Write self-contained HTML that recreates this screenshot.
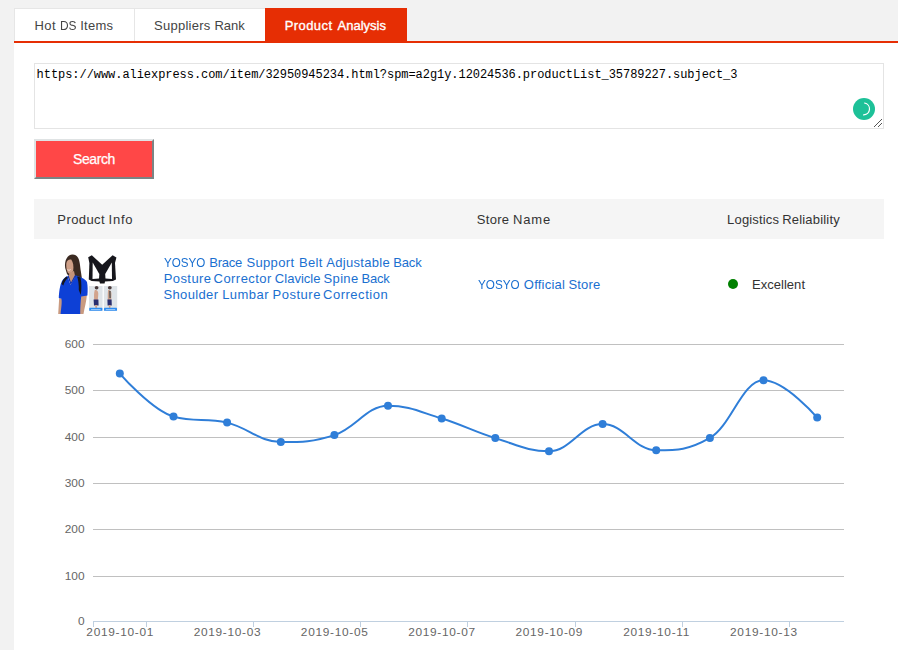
<!DOCTYPE html>
<html lang="en">
<head>
<meta charset="utf-8">
<title>Product Analysis</title>
<style>
html,body{margin:0;padding:0;}
body{width:898px;height:650px;overflow:hidden;background:#f2f2f2;font-family:"Liberation Sans",sans-serif;color:#333;position:relative;}
.abs{position:absolute;}
#panel{left:14px;top:42px;width:884px;height:608px;background:#fff;}
#tabs{left:14px;top:8px;height:33px;width:884px;}
#redline{left:14px;top:41px;width:884px;height:2px;background:#e62e04;}
.tab{position:absolute;top:0;height:33px;line-height:33px;font-size:13px;color:#444;background:#fff;box-sizing:border-box;border-top:1px solid #e6e6e6;white-space:nowrap;}
#t1{left:0;width:121px;border-left:1px solid #e6e6e6;border-right:1px solid #e6e6e6;}
#t2{left:121px;width:130px;}
#t3{left:251px;width:142px;background:#e62e04;color:#fff;border-top-color:#e62e04;-webkit-text-stroke:0.35px #fff;}
.tab span{position:absolute;top:0;}
#ta{left:34px;top:63px;width:850px;height:66px;box-sizing:border-box;border:1px solid #e4e4e4;background:#fff;}
#ta span{position:absolute;left:1.6px;top:4px;font-family:"Liberation Mono",monospace;font-size:12px;letter-spacing:-0.05px;color:#000;line-height:15px;white-space:nowrap;}
#btn{left:34px;top:139px;width:120px;height:40px;box-sizing:border-box;border:2px solid;border-color:#dfe3e4 #7b8484 #7b8484 #dfe3e4;background:#ff4747;color:#fff;font-size:14px;letter-spacing:-0.4px;text-align:center;line-height:37px;-webkit-text-stroke:0.25px #fff;}
#thead{left:34px;top:199px;width:850px;height:40px;background:#f5f5f5;}
.th{position:absolute;top:200px;height:40px;line-height:40px;font-size:13px;color:#333;white-space:nowrap;}
.link{color:#1a6fd0;}
</style>
</head>
<body>
<div class="abs" id="panel"></div>
<div class="abs" id="tabs">
  <div class="tab" id="t1"><span style="position:absolute;left:19.4px;top:0px;letter-spacing:0.5px">Hot </span><span style="position:absolute;left:44.5px;top:0px;transform:scaleX(0.918);transform-origin:0 0">DS </span><span style="position:absolute;left:65.2px;top:0px;letter-spacing:0.25px">Items</span></div>
  <div class="tab" id="t2"><span style="position:absolute;left:19.0px;top:0px;letter-spacing:0.27px">Suppliers </span><span style="position:absolute;left:79.5px;top:0px;letter-spacing:-0.07px">Rank</span></div>
  <div class="tab" id="t3"><span style="position:absolute;left:19.8px;top:0px;letter-spacing:0.4px">Product </span><span style="position:absolute;left:72.6px;top:0px;letter-spacing:0.0px">Analysis</span></div>
</div>
<div class="abs" id="redline"></div>

<div class="abs" id="ta"><span>https://www.aliexpress.com/item/32950945234.html?spm=a2g1y.12024536.productList_35789227.subject_3</span></div>
<svg class="abs" style="left:853px;top:98px" width="32" height="32" viewBox="0 0 32 32">
  <circle cx="11" cy="11" r="11" fill="#1dc198"/>
  <path d="M11.6 5 A6 6 0 0 1 10.6 16.9" fill="none" stroke="#fff" stroke-width="1.2" stroke-linecap="round"/>
  <path d="M21 29 L29 21 M25 29 L29 25" stroke="#555" stroke-width="1" fill="none"/>
</svg>

<div class="abs" id="btn">Search</div>

<div class="abs" id="thead"></div>
<div class="th" style="left:0"><span style="position:absolute;left:57.3px;top:0px;letter-spacing:0.42px">Product </span><span style="position:absolute;left:108.5px;top:0px;letter-spacing:0.77px">Info</span></div>
<div class="th" style="left:0"><span style="position:absolute;left:476.8px;top:0px;letter-spacing:0.3px">Store </span><span style="position:absolute;left:513.1px;top:0px;letter-spacing:0.8px">Name</span></div>
<div class="th" style="left:0"><span style="position:absolute;left:727.1px;top:0px;letter-spacing:0.17px">Logistics </span><span style="position:absolute;left:782.2px;top:0px;letter-spacing:0.19px">Reliability</span></div>

<svg class="abs" id="pimg" style="left:58px;top:254px" width="60" height="60" viewBox="0 0 60 60">
<defs><filter id="bl" x="-5%" y="-5%" width="110%" height="110%"><feGaussianBlur stdDeviation="0.45"/></filter></defs>
<rect width="60" height="60" fill="#fff"/>
<g filter="url(#bl)">
<!-- hair back -->
<path d="M7.2 14 C6.2 6 9.5 0.6 14.5 0.4 C19.5 0.4 21.5 5 22 11 C22.6 17 23.6 21 24 25.5 L18.5 25.5 L12 23 L9 20 Z" fill="#3b2a22"/>
<!-- face -->
<path d="M8.3 9.5 C8.6 6.5 11 5 13.2 5.6 C15.2 8 15.8 12.5 15.2 16.5 C14.5 18.8 12.5 20 10.8 19.6 C9 18.5 8 14 8.3 9.5 Z" fill="#cfa088"/>
<path d="M9.5 15.6 C10.5 16.5 11.8 16.4 12.6 15.4" stroke="#fff" stroke-width="0.7" fill="none"/>
<!-- neck -->
<path d="M11.5 18.5 L16 17 L17.5 24 L13 30 L10.5 23 Z" fill="#c4937a"/>
<!-- left arm -->
<path d="M1.2 44 L4.5 45 L3.6 60 L0.2 60 Z" fill="#c99a80"/>
<!-- right arm -->
<path d="M22.5 41 L29 40 C28.5 47 26.5 54 25.5 60 L21.5 60 Z" fill="#c99a80"/>
<!-- shirt -->
<path d="M9.5 22 L12.5 31 L18 21.5 C22 23 27 24.5 29 28 C29.8 32 29.8 37 29.4 41.5 L23.2 42.5 C22.6 48 22.2 54 22.2 60 L2.6 60 C3.2 54 4.2 48 3.4 44.8 L0.8 44 C1 38 2 31 4 27 C5.5 24.5 7.5 23 9.5 22 Z" fill="#0f3fd6"/>
<path d="M10.6 21.5 L13 29.5 L17.4 21 Z" fill="#c4937a"/>
<path d="M9.5 22 L12.7 31 L18 21.5 L17 21 L13 28.6 L10.6 21.6 Z" fill="#0a2fb0"/>
<!-- straps on woman -->
<path d="M3.6 30 C4.2 26.5 6.3 24 8.8 22.6 L9.8 24 C7.6 26 6.2 28.5 5.4 31.5 Z" fill="#15151a"/>
<path d="M19.2 22.4 L22.6 23.6 C23.6 29 23.6 35 22.8 41 L20.8 36 C21 31 20.4 26.5 19.2 22.4 Z" fill="#15151a"/>
<!-- brace -->
<path d="M30.2 3.2 L33.8 1.2 L44.2 10.8 L54.6 1.2 L58.4 3.4 L57 9 L58 25.5 L54.8 27 L47 27.6 L46.6 29.6 L42 29.6 L41.4 27.6 L33.6 27 L30.8 25.5 L31.4 9 Z" fill="#17171b"/>
<path d="M34.7 8.4 L41.3 20 L41 24.4 L34.5 25 Z" fill="#fff"/>
<path d="M53.8 8.4 L47.2 20 L47.5 24.4 L54 25 Z" fill="#fff"/>
<path d="M39.2 5.2 L44.2 11 L49.2 5.2 L44.2 4.2 Z" fill="#fff" opacity="0"/>
<!-- photos -->
<rect x="31" y="32" width="13.6" height="24.8" fill="#dfe4e8"/>
<rect x="45.8" y="32" width="13.4" height="24.8" fill="#dfe4e8"/>
<ellipse cx="38.6" cy="33.8" rx="1.9" ry="1.8" fill="#4a3a3a"/>
<ellipse cx="51.8" cy="33.8" rx="1.9" ry="1.8" fill="#4a3a3a"/>
<path d="M36.8 36 C39.5 35.5 40.8 38 40.2 41.5 L39.8 46 L36.2 46 C36 42.5 35.8 39 36.8 36 Z" fill="#d2a48c"/>
<path d="M50.2 36 C52.8 35.5 53.8 38 53.4 41.5 L53.2 46 L49.8 46 C49.8 42.5 49.6 39 50.2 36 Z" fill="#c9a08c"/>
<path d="M51.2 37 L52.6 37 L52.8 44 L51.4 44 Z" fill="#555"/>
<path d="M35.6 45.4 L40.4 45.4 L40.6 51.4 L36 51.4 Z" fill="#2a2f6e"/>
<path d="M49.4 45.4 L53.6 45.4 L53.8 51.4 L49.6 51.4 Z" fill="#2a2f6e"/>
<path d="M37 51 L39.2 51 L39 54 L37.4 54 Z" fill="#d2a48c"/>
<path d="M50.6 51 L52.6 51 L52.4 54 L51 54 Z" fill="#d2a48c"/>
<rect x="31.2" y="53.8" width="13.2" height="3" rx="0.6" fill="#2f8df2"/>
<rect x="46" y="53.8" width="13" height="3" rx="0.6" fill="#2f8df2"/>
<rect x="33" y="55" width="9.6" height="0.7" fill="#bfe0ff"/>
<rect x="47.8" y="55" width="9.4" height="0.7" fill="#bfe0ff"/>
</g>
</svg>

<div class="abs link" id="title" style="left:0;top:255px;font-size:13px;line-height:16px;white-space:nowrap">
<span class="abs" style="left:164.4px;top:0px;transform:scaleX(0.895);transform-origin:0 0">YOSYO </span>
<span class="abs" style="left:209.2px;top:0px;letter-spacing:-0.2px">Brace </span>
<span class="abs" style="left:246.4px;top:0px;letter-spacing:0.35px">Support </span>
<span class="abs" style="left:299.1px;top:0px;letter-spacing:0.3px">Belt </span>
<span class="abs" style="left:326.2px;top:0px;letter-spacing:0.32px">Adjustable </span>
<span class="abs" style="left:393.2px;top:0px;letter-spacing:-0.13px">Back</span>
<span class="abs" style="left:163.7px;top:16px;letter-spacing:0.42px">Posture </span>
<span class="abs" style="left:213.6px;top:16px;letter-spacing:0.44px">Corrector </span>
<span class="abs" style="left:274.8px;top:16px;letter-spacing:0.03px">Clavicle </span>
<span class="abs" style="left:323.6px;top:16px;letter-spacing:0.32px">Spine </span>
<span class="abs" style="left:361.5px;top:16px;letter-spacing:-0.23px">Back</span>
<span class="abs" style="left:163.4px;top:32px;letter-spacing:0.37px">Shoulder </span>
<span class="abs" style="left:222.2px;top:32px;letter-spacing:0.44px">Lumbar </span>
<span class="abs" style="left:272.6px;top:32px;letter-spacing:0.5px">Posture </span>
<span class="abs" style="left:323px;top:32px;letter-spacing:0.52px">Correction</span>
</div>
<div class="abs link" style="left:0;top:277px;font-size:13px;line-height:16px;white-space:nowrap"><span style="position:absolute;left:478.1px;top:0px;transform:scaleX(0.902);transform-origin:0 0">YOSYO </span><span style="position:absolute;left:523.8px;top:0px;letter-spacing:0.23px">Official </span><span style="position:absolute;left:568.4px;top:0px;letter-spacing:0.22px">Store</span></div>
<div class="abs" style="left:728px;top:279px;width:10px;height:10px;border-radius:50%;background:#008000"></div>
<div class="abs" style="left:752px;top:277px;font-size:13px;letter-spacing:0.03px;line-height:16px;white-space:nowrap;color:#333">Excellent</div>

<svg class="abs" id="chart" style="left:34px;top:330px" width="850" height="320" viewBox="34 330 850 320">
<rect x="93" y="344" width="751" height="1" fill="#c0c0c0"/>
<rect x="93" y="390" width="751" height="1" fill="#c0c0c0"/>
<rect x="93" y="437" width="751" height="1" fill="#c0c0c0"/>
<rect x="93" y="483" width="751" height="1" fill="#c0c0c0"/>
<rect x="93" y="529" width="751" height="1" fill="#c0c0c0"/>
<rect x="93" y="576" width="751" height="1" fill="#c0c0c0"/>
<rect x="93" y="621" width="751" height="1" fill="#c0d0e0"/>
<rect x="93" y="622" width="1" height="5" fill="#c0d0e0"/>
<rect x="146" y="622" width="1" height="5" fill="#c0d0e0"/>
<rect x="253" y="622" width="1" height="5" fill="#c0d0e0"/>
<rect x="360" y="622" width="1" height="5" fill="#c0d0e0"/>
<rect x="467" y="622" width="1" height="5" fill="#c0d0e0"/>
<rect x="575" y="622" width="1" height="5" fill="#c0d0e0"/>
<rect x="682" y="622" width="1" height="5" fill="#c0d0e0"/>
<rect x="789" y="622" width="1" height="5" fill="#c0d0e0"/>
<g font-family='"Liberation Sans",sans-serif' font-size="11" fill="#666">
<text transform="translate(84.5 348.2) scale(1.08 1)" text-anchor="end" letter-spacing="0.0">600</text>
<text transform="translate(84.5 394.2) scale(1.08 1)" text-anchor="end" letter-spacing="0.0">500</text>
<text transform="translate(84.5 441.2) scale(1.08 1)" text-anchor="end" letter-spacing="0.0">400</text>
<text transform="translate(84.5 487.2) scale(1.08 1)" text-anchor="end" letter-spacing="0.0">300</text>
<text transform="translate(84.5 533.2) scale(1.08 1)" text-anchor="end" letter-spacing="0.0">200</text>
<text transform="translate(84.5 580.2) scale(1.08 1)" text-anchor="end" letter-spacing="0.0">100</text>
<text transform="translate(84.5 625.2) scale(1.08 1)" text-anchor="end" letter-spacing="0.0">0</text>
<text transform="translate(120.2 636) scale(1.08 1)" text-anchor="middle" letter-spacing="0.65">2019-10-01</text>
<text transform="translate(227.5 636) scale(1.08 1)" text-anchor="middle" letter-spacing="0.65">2019-10-03</text>
<text transform="translate(334.7 636) scale(1.08 1)" text-anchor="middle" letter-spacing="0.65">2019-10-05</text>
<text transform="translate(442.0 636) scale(1.08 1)" text-anchor="middle" letter-spacing="0.65">2019-10-07</text>
<text transform="translate(549.3 636) scale(1.08 1)" text-anchor="middle" letter-spacing="0.65">2019-10-09</text>
<text transform="translate(656.6 636) scale(1.08 1)" text-anchor="middle" letter-spacing="0.65">2019-10-11</text>
<text transform="translate(763.9 636) scale(1.08 1)" text-anchor="middle" letter-spacing="0.65">2019-10-13</text>
</g>
<path d="M119.8 373.6 C119.8 373.6 152.0 410.6 173.5 416.6 C194.9 422.6 205.7 417.5 227.1 422.6 C248.6 427.7 259.3 442.0 280.8 442.0 C302.2 442.0 312.9 442.0 334.4 435.1 C355.9 428.2 366.6 405.7 388.0 405.7 C409.5 405.7 420.2 412.0 441.7 418.5 C463.1 425.0 473.9 431.5 495.3 438.1 C516.8 444.7 527.5 451.3 549.0 451.3 C570.4 451.3 581.1 424.1 602.6 424.1 C624.1 424.1 634.8 450.2 656.2 450.2 C677.7 450.2 688.4 450.2 709.9 437.9 C731.4 425.6 742.1 380.3 763.5 380.3 C785.0 380.3 817.2 417.6 817.2 417.6" fill="none" stroke="#2f7ed8" stroke-width="2" stroke-linejoin="round" stroke-linecap="round"/>
<circle cx="119.8" cy="373.6" r="4" fill="#2f7ed8"/>
<circle cx="173.5" cy="416.6" r="4" fill="#2f7ed8"/>
<circle cx="227.1" cy="422.6" r="4" fill="#2f7ed8"/>
<circle cx="280.8" cy="442.0" r="4" fill="#2f7ed8"/>
<circle cx="334.4" cy="435.1" r="4" fill="#2f7ed8"/>
<circle cx="388.0" cy="405.7" r="4" fill="#2f7ed8"/>
<circle cx="441.7" cy="418.5" r="4" fill="#2f7ed8"/>
<circle cx="495.3" cy="438.1" r="4" fill="#2f7ed8"/>
<circle cx="549.0" cy="451.3" r="4" fill="#2f7ed8"/>
<circle cx="602.6" cy="424.1" r="4" fill="#2f7ed8"/>
<circle cx="656.2" cy="450.2" r="4" fill="#2f7ed8"/>
<circle cx="709.9" cy="437.9" r="4" fill="#2f7ed8"/>
<circle cx="763.5" cy="380.3" r="4" fill="#2f7ed8"/>
<circle cx="817.2" cy="417.6" r="4" fill="#2f7ed8"/>
</svg>
</body>
</html>
